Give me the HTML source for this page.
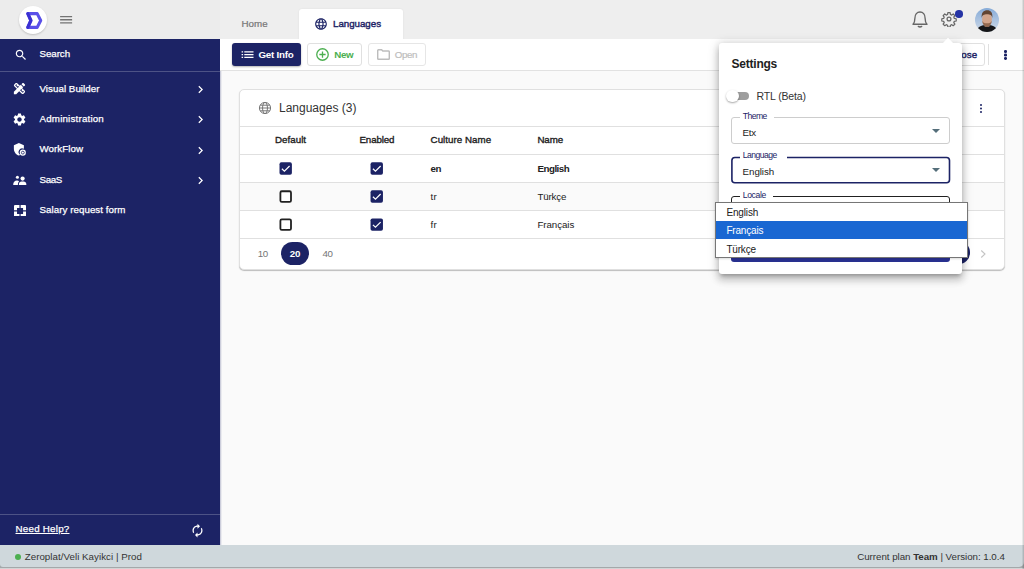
<!DOCTYPE html>
<html lang="en">
<head>
<meta charset="utf-8">
<title>Languages</title>
<style>
*{box-sizing:border-box;margin:0;padding:0}
html,body{width:1024px;height:569px;overflow:hidden;background:#fafafa}
body{font-family:"Liberation Sans",sans-serif;font-size:9.75px;color:#212121;position:relative}
div,svg,span{position:absolute}
.t{white-space:nowrap;line-height:12px;height:12px}
.b{font-weight:700}
b{font-weight:700}
</style>
</head>
<body>
<div style="left:0px;top:0px;width:1024px;height:39px;background:#ececec"></div>
<div style="left:220px;top:0px;width:804px;height:39px;background:#eeeeee"></div>
<div style="left:18.7px;top:5.5px;width:28.6px;height:28.6px;border-radius:50%;background:#fff;box-shadow:0 1px 2px rgba(0,0,0,.18)"></div>
<svg style="left:19px;top:6px" width="28" height="28" viewBox="0 0 28 28" ><path d="M8.800 7.600 H18.200 L21.700 14.500 L18.200 21.400 H8.800 L11.900 14.500 Z" fill="none" stroke="#5a50e8" stroke-width="3.100" stroke-linejoin="round"/><path d="M8.800 7.600 L11.900 14.500 L8.800 21.400" fill="none" stroke="#3a30d2" stroke-width="3.100" stroke-linejoin="round" stroke-linecap="round"/></svg>
<svg style="left:59px;top:14px" width="14" height="11" viewBox="0 0 14 11" ><path d="M1.100 2.700h12M1.100 5.750h12M1.100 8.800h12" stroke="#737373" stroke-width="1.300"/></svg>
<span class="t" style="top:17.80px;font-size:9.75px;color:#757575;left:241.4px;letter-spacing:0.071px;-webkit-text-stroke:0.2px #757575;">Home</span><div style="left:299px;top:9px;width:103.5px;height:30.5px;background:#fff;border-radius:3px 3px 0 0;box-shadow:0 0 2px rgba(0,0,0,.08)"></div>
<svg style="left:314.3px;top:16.5px" width="14" height="14" viewBox="0 0 24 24" ><path fill="#1c2365" d="M11.99 2C6.47 2 2 6.48 2 12s4.47 10 9.99 10C17.52 22 22 17.52 22 12S17.52 2 11.99 2zm6.93 6h-2.95c-.32-1.25-.78-2.45-1.38-3.56 1.84.63 3.37 1.91 4.33 3.56zM12 4.040c.83 1.2 1.480 2.530 1.910 3.960h-3.820c.43-1.430 1.080-2.760 1.910-3.960zM4.260 14C4.100 13.360 4 12.690 4 12s.1-1.360.26-2h3.380c-.08.660-.14 1.320-.14 2 0 .68.060 1.340.14 2H4.260zm.82 2h2.950c.32 1.250.78 2.450 1.380 3.560-1.840-.63-3.370-1.900-4.330-3.560zm2.950-8H5.080c.96-1.660 2.490-2.930 4.330-3.560C8.810 5.550 8.350 6.750 8.030 8zM12 19.960c-.83-1.2-1.480-2.530-1.910-3.960h3.820c-.43 1.430-1.080 2.760-1.910 3.960zM14.340 14H9.660c-.09-.66-.16-1.320-.16-2 0-.68.070-1.350.16-2h4.680c.09.650.16 1.320.16 2 0 .68-.07 1.340-.16 2zm.25 5.560c.6-1.110 1.060-2.310 1.380-3.560h2.950c-.96 1.650-2.490 2.930-4.330 3.560zM16.360 14c.08-.66.14-1.320.14-2 0-.68-.06-1.340-.14-2h3.380c.16.640.26 1.310.26 2s-.1 1.360-.26 2h-3.380z"/></svg>
<span class="t" style="top:17.50px;font-size:9.75px;color:#1c2365;left:333px;letter-spacing:-0.030px;-webkit-text-stroke:0.4px #1c2365;">Languages</span><svg style="left:911px;top:10px" width="18" height="19" viewBox="0 0 18 19" ><path d="M2 14.200 C3.600 12.600 3.900 11 3.900 8.200 C3.900 4.600 6 2 9 2 C12 2 14.100 4.600 14.100 8.200 C14.100 11 14.400 12.600 16 14.200 Z" fill="none" stroke="#666" stroke-width="1.350" stroke-linejoin="round"/><path d="M7.300 16.400 Q9 17.600 10.700 16.400" fill="none" stroke="#666" stroke-width="1.350" stroke-linecap="round"/></svg>
<svg style="left:940.5px;top:10.9px" width="16" height="16" viewBox="0 0 24 24" fill="none" stroke="#666" stroke-width="1.850" stroke-linejoin="round"><path d="M10.300 2.500 h3.400 l.5 2.800 l1.900 .8 l2.300 -1.600 l2.400 2.400 l-1.600 2.300 l.8 1.900 l2.800 .5 v3.400 l-2.800 .5 l-.8 1.900 l1.600 2.300 l-2.400 2.400 l-2.300 -1.600 l-1.900 .8 l-.5 2.800 h-3.400 l-.5 -2.800 l-1.900 -.8 l-2.300 1.600 l-2.400 -2.400 l1.600 -2.300 l-.8 -1.900 l-2.800 -.5 v-3.400 l2.800 -.5 l.8 -1.900 l-1.600 -2.300 l2.400 -2.400 l2.300 1.600 l1.900 -.8 z"/><circle cx="12" cy="12" r="2.900"/></svg>
<div style="left:955px;top:10px;width:7.5px;height:7.5px;border-radius:50%;background:#2533a5"></div>
<svg style="left:975px;top:7.5px" width="24" height="24" viewBox="0 0 24 24" ><defs><clipPath id="av"><circle cx="12" cy="12" r="12"/></clipPath><linearGradient id="avg" x1="0" y1="0" x2="0" y2="1"><stop offset="0" stop-color="#86abd8"/><stop offset="1" stop-color="#cfdae8"/></linearGradient></defs><g clip-path="url(#av)"><rect width="24" height="24" fill="url(#avg)"/><path d="M1.500 24 C2 19.500 5 18 8.500 17.300 L15.500 17.300 C19 18 22 19.500 22.500 24 Z" fill="#151618"/><rect x="9.600" y="14.500" width="4.800" height="4.200" fill="#b98a6f"/><ellipse cx="12" cy="11.300" rx="4.900" ry="6.300" fill="#d2a58b"/><path d="M6.700 10 C6.200 4.300 8.800 2.200 12.200 2.200 C15.700 2.200 17.800 4.300 17.300 10 C16.700 7 15.300 6.300 12 6.300 C8.900 6.300 7.300 7 6.700 10 Z" fill="#624532"/><path d="M7.200 12.800 C7.600 17.300 9.800 18.400 12 18.400 C14.200 18.400 16.400 17.300 16.800 12.800 C15.800 15.200 13.600 15.300 12 15.300 C10.400 15.300 8.200 15.200 7.200 12.800 Z" fill="#946a50"/></g></svg>
<div style="left:220px;top:39px;width:2px;height:506px;background:linear-gradient(90deg,rgba(28,35,101,.28),rgba(28,35,101,0))"></div>
<div style="left:0px;top:39px;width:220px;height:506px;background:#1c2365"></div>
<svg style="left:13.5px;top:47.5px" width="14" height="14" viewBox="0 0 24 24" ><path fill="#fff" d="M15.5 14h-.79l-.28-.27C15.41 12.59 16 11.11 16 9.5 16 5.91 13.09 3 9.5 3S3 5.91 3 9.5 5.91 16 9.5 16c1.61 0 3.09-.59 4.23-1.57l.27.28v.79l5 4.99L20.49 19l-4.99-5zm-6 0C7.01 14 5 11.99 5 9.5S7.01 5 9.5 5 14 7.01 14 9.500 11.990 14 9.500 14z"/></svg>
<span class="t" style="top:48.30px;font-size:9.75px;color:#fff;left:39.5px;letter-spacing:-0.068px;-webkit-text-stroke:0.25px #fff;">Search</span><div style="left:0px;top:70.5px;width:220px;height:1px;background:rgba(255,255,255,.22)"></div>
<span class="t" style="top:82.50px;font-size:9.75px;color:#fff;left:39.5px;letter-spacing:0.039px;-webkit-text-stroke:0.25px #fff;">Visual Builder</span><span class="t" style="top:113.00px;font-size:9.75px;color:#fff;left:39.5px;letter-spacing:0.194px;-webkit-text-stroke:0.25px #fff;">Administration</span><span class="t" style="top:143.20px;font-size:9.75px;color:#fff;left:39.5px;letter-spacing:0.043px;-webkit-text-stroke:0.25px #fff;">WorkFlow</span><span class="t" style="top:173.70px;font-size:9.75px;color:#fff;left:39.5px;letter-spacing:-0.340px;-webkit-text-stroke:0.25px #fff;">SaaS</span><span class="t" style="top:204.10px;font-size:9.75px;color:#fff;left:39.5px;letter-spacing:0.049px;-webkit-text-stroke:0.25px #fff;">Salary request form</span><svg style="left:193.2px;top:81.9px" width="15" height="15" viewBox="0 0 24 24" ><path fill="#fff" d="M10 6L8.59 7.41 13.17 12l-4.58 4.59L10 18l6-6z"/></svg>
<svg style="left:193.2px;top:112.4px" width="15" height="15" viewBox="0 0 24 24" ><path fill="#fff" d="M10 6L8.59 7.41 13.17 12l-4.58 4.59L10 18l6-6z"/></svg>
<svg style="left:193.2px;top:142.7px" width="15" height="15" viewBox="0 0 24 24" ><path fill="#fff" d="M10 6L8.59 7.41 13.17 12l-4.58 4.59L10 18l6-6z"/></svg>
<svg style="left:193.2px;top:173.2px" width="15" height="15" viewBox="0 0 24 24" ><path fill="#fff" d="M10 6L8.59 7.41 13.17 12l-4.58 4.59L10 18l6-6z"/></svg>
<svg style="left:12.05px;top:81.4px" width="15" height="15" viewBox="0 0 24 24" ><path fill="#fff" d="M16.24 11.51l1.57-1.57-3.75-3.75-1.57 1.57-4.14-4.13c-.78-.78-2.05-.78-2.830 0l-1.900 1.900c-.78.78-.78 2.050 0 2.830l4.130 4.130L3 17.250V21h3.750l4.760-4.760 4.130 4.130c.95.95 2.230.6 2.830 0l1.900-1.900c.78-.78.78-2.050 0-2.830l-4.130-4.130zm-7.060-.44L5.040 6.940l1.890-1.900L8.200 6.310 7.020 7.500l1.410 1.410 1.190-1.190 1.450 1.450-1.890 1.900zm7.880 7.890l-4.130-4.130 1.900-1.900 1.450 1.450-1.190 1.190 1.410 1.410 1.190-1.190 1.270 1.270-1.900 1.900zM20.710 7.040c.39-.39.39-1.020 0-1.410l-2.340-2.340c-.47-.47-1.120-.29-1.410 0l-1.830 1.830 3.750 3.750 1.830-1.830z"/></svg>
<svg style="left:12.4px;top:111.7px" width="15" height="15" viewBox="0 0 24 24" ><path fill="#fff" d="M19.14 12.94c.04-.3.06-.61.06-.94 0-.32-.02-.64-.07-.94l2.03-1.58c.18-.14.23-.41.12-.61l-1.92-3.32c-.12-.22-.37-.29-.59-.22l-2.39.96c-.5-.38-1.03-.7-1.62-.94l-.36-2.54c-.04-.24-.24-.41-.48-.41h-3.84c-.24 0-.43.17-.47.41l-.36 2.54c-.59.24-1.13.57-1.62.94l-2.39-.96c-.22-.08-.47 0-.59.22L2.740 8.870c-.12.21-.08.47.12.61l2.030 1.580c-.05.3-.09.630-.09.940s.02.640.07.940l-2.030 1.580c-.18.140-.23.410-.12.610l1.920 3.320c.12.220.37.290.59.220l2.390-.96c.5.380 1.030.7 1.620.94l.36 2.540c.05.240.24.410.48.410h3.840c.24 0 .44-.17.470-.41l.36-2.540c.59-.24 1.130-.56 1.620-.94l2.390.96c.22.080.47 0 .59-.22l1.920-3.320c.12-.22.070-.47-.12-.61l-2.010-1.580zM12 15.600c-1.980 0-3.600-1.620-3.600-3.600s1.620-3.600 3.600-3.600 3.600 1.620 3.600 3.600-1.620 3.600-3.600 3.600z"/></svg>
<svg style="left:12px;top:142.3px" width="15" height="15" viewBox="0 0 24 24" ><path fill="#fff" d="M11 1.500L3 5v5.600c0 5 3.400 9.700 8 10.900 .75-.2 1.450-.5 2.100-.85 A5.800 5.800 0 0 1 19 10.700 V5z"/><circle cx="17.300" cy="17" r="4.900" fill="#fff"/><circle cx="17.300" cy="17" r="2.300" fill="none" stroke="#1c2365" stroke-width="1.300"/></svg>
<svg style="left:12px;top:174px" width="16" height="12" viewBox="0 0 16 12" ><g fill="#fff"><circle cx="5.400" cy="3.200" r="1.550"/><path d="M1.200 11 C1.200 8.200 2.600 6.600 5 6.600 C5.900 6.600 6.600 6.800 7.100 7.200 C6.300 8 5.900 9.200 5.900 11 Z"/><circle cx="10.600" cy="4.600" r="2.100"/><path d="M6.800 11 C6.800 8.600 8.200 7.600 9.400 7.600 L11.800 7.600 C13 7.600 14.400 8.600 14.400 11 Z"/></g></svg>
<svg style="left:13.7px;top:204.5px" width="12.1" height="11.9" viewBox="0 0 12 12" preserveAspectRatio="none"><path fill="#fff" d="M1 0h4.400v3H3v2.400H0V1a1 1 0 0 1 1-1zM11 0a1 1 0 0 1 1 1v4.400H9V3H6.600V0zM0 6.600h3V9h2.400v3H1a1 1 0 0 1-1-1zM12 6.600V11a1 1 0 0 1-1 1H6.600V9H9V6.600z"/></svg>
<div style="left:0px;top:514px;width:220px;height:1px;background:rgba(255,255,255,.22)"></div>
<span class="t" style="top:523.10px;font-size:9.75px;color:#fff;left:15.5px;letter-spacing:0.250px;-webkit-text-stroke:0.25px #fff;text-decoration:underline;">Need Help?</span><svg style="left:190px;top:522.9px" width="15" height="15" viewBox="0 0 24 24" ><path fill="#fff" d="M12 6v3l4-4-4-4v3c-4.42 0-8 3.58-8 8 0 1.57.46 3.030 1.240 4.260L6.700 14.800c-.45-.83-.7-1.790-.7-2.800 0-3.310 2.690-6 6-6zm6.760 1.740L17.300 9.200c.44.840.7 1.790.7 2.800 0 3.310-2.690 6-6 6v-3l-4 4 4 4v-3c4.420 0 8-3.580 8-8 0-1.570-.46-3.030-1.240-4.260z"/></svg>
<div style="left:220px;top:39px;width:804px;height:31.5px;background:#fff;border-bottom:1px solid #e2e2e2"></div>
<div style="left:232px;top:43px;width:69px;height:23px;background:#1c2365;border-radius:3px;box-shadow:0 1px 2px rgba(0,0,0,.3)"></div>
<svg style="left:241px;top:50px" width="13" height="9" viewBox="0 0 13 9" ><path d="M0.600 1.900h1.500M3.300 1.900h9.200M0.600 4.650h1.500M3.300 4.650h9.200M0.600 7.400h1.500M3.300 7.400h9.200" stroke="#fff" stroke-width="1.350"/></svg>
<span class="t b" style="top:48.50px;font-size:9.75px;color:#fff;left:258.5px;letter-spacing:-0.230px;">Get Info</span><div style="left:307px;top:43px;width:54.5px;height:22.6px;background:#fff;border:1px solid #e0e0e0;border-radius:3px"></div>
<svg style="left:315.3px;top:47.2px" width="15" height="15" viewBox="0 0 24 24" ><circle cx="12" cy="12" r="9.200" fill="none" stroke="#4caf50" stroke-width="2.100"/><path d="M12 7v10M7 12h10" stroke="#4caf50" stroke-width="2.100"/></svg>
<span class="t b" style="top:48.50px;font-size:9.75px;color:#4caf50;left:334.3px;letter-spacing:-0.354px;">New</span><div style="left:368px;top:43px;width:57.5px;height:22.6px;background:#fff;border:1px solid #e6e6e6;border-radius:3px"></div>
<svg style="left:377px;top:49px" width="13" height="11" viewBox="0 0 13 11" ><path d="M0.700 1.700 Q0.700 0.700 1.700 0.700 H4.600 L5.800 2 H11.300 Q12.300 2 12.300 3 V9.300 Q12.300 10.300 11.300 10.300 H1.700 Q0.700 10.300 0.700 9.300 Z" fill="none" stroke="#bdbdbd" stroke-width="1.450"/></svg>
<span class="t" style="top:48.50px;font-size:9.75px;color:#bdbdbd;left:394.8px;letter-spacing:-0.390px;-webkit-text-stroke:0.2px #bdbdbd;">Open</span><div style="left:932px;top:43px;width:53px;height:22.6px;background:#fff;border:1px solid #e0e0e0;border-radius:3px"></div>
<span class="t" style="top:48.50px;font-size:9.75px;color:#1c2365;left:951.5px;letter-spacing:0.212px;-webkit-text-stroke:0.4px #1c2365;">Close</span><div style="left:988px;top:44px;width:1px;height:21px;background:#e0e0e0"></div>
<div style="left:1004.450px;top:50.200px;width:2.600px;height:2.600px;border-radius:50%;background:#1c2365;box-shadow:0 3.450px 0 #1c2365,0 6.900px 0 #1c2365"></div>
<div style="left:239px;top:89px;width:766px;height:181px;background:#fff;border:1px solid #e0e0e0;border-radius:5px;box-shadow:0 1px 1px rgba(0,0,0,.25)"></div>
<svg style="left:258px;top:100.8px" width="14" height="14" viewBox="0 0 24 24" ><g fill="none" stroke="#757575" stroke-width="1.700"><circle cx="12" cy="12" r="9.600"/><ellipse cx="12" cy="12" rx="4.200" ry="9.600"/><path d="M2.400 12h19.200M3.800 7.200h16.400M3.800 16.800h16.400"/></g></svg>
<span class="t" style="top:99.70px;font-size:12px;color:#333;left:279px;line-height:16px;height:16px;letter-spacing:0.001px;">Languages (3)</span><div style="left:979.700px;top:103.550px;width:2.400px;height:2.400px;border-radius:50%;background:#1c2365;box-shadow:0 3.550px 0 #1c2365,0 7.100px 0 #1c2365"></div>
<div style="left:240px;top:182.5px;width:764px;height:28px;background:#fafafa"></div>
<div style="left:240px;top:126px;width:764px;height:1px;background:#e0e0e0"></div>
<div style="left:240px;top:154px;width:764px;height:1px;background:#e0e0e0"></div>
<div style="left:240px;top:182px;width:764px;height:1px;background:#e0e0e0"></div>
<div style="left:240px;top:210px;width:764px;height:1px;background:#e0e0e0"></div>
<div style="left:240px;top:238px;width:764px;height:1px;background:#e0e0e0"></div>
<span class="t" style="top:134.00px;font-size:9.75px;color:#212121;left:275px;letter-spacing:0.028px;-webkit-text-stroke:0.35px #212121;">Default</span><span class="t" style="top:134.00px;font-size:9.75px;color:#212121;left:359.5px;letter-spacing:-0.142px;-webkit-text-stroke:0.35px #212121;">Enabled</span><span class="t" style="top:134.00px;font-size:9.75px;color:#212121;left:430.6px;letter-spacing:0.029px;-webkit-text-stroke:0.35px #212121;">Culture Name</span><span class="t" style="top:134.00px;font-size:9.75px;color:#212121;left:537.4px;letter-spacing:-0.079px;-webkit-text-stroke:0.35px #212121;">Name</span><svg style="left:277px;top:160px" width="16" height="16" viewBox="0 0 16 16" ><g transform="translate(2.50,2.35) scale(0.5167)"><rect x="0" y="0" width="24" height="24" rx="3.500" fill="#1c2365"/><path d="M4.600 12.400l4.900 4.700 10-10" fill="none" stroke="#fff" stroke-width="2.300"/></g></svg>
<svg style="left:368px;top:160px" width="16" height="16" viewBox="0 0 16 16" ><g transform="translate(2.55,2.35) scale(0.5167)"><rect x="0" y="0" width="24" height="24" rx="3.500" fill="#1c2365"/><path d="M4.600 12.400l4.900 4.700 10-10" fill="none" stroke="#fff" stroke-width="2.300"/></g></svg>
<span class="t b" style="top:162.60px;font-size:9.75px;color:#212121;left:430.6px;letter-spacing:-0.395px;">en</span><span class="t b" style="top:162.60px;font-size:9.75px;color:#212121;left:537.4px;letter-spacing:-0.474px;">English</span><svg style="left:277px;top:188px" width="16" height="16" viewBox="0 0 16 16" ><g transform="translate(2.50,2.35)"><rect x="0.900" y="0.900" width="10.600" height="10.600" rx="1.400" fill="#fff" stroke="#212121" stroke-width="1.800"/></g></svg>
<svg style="left:368px;top:188px" width="16" height="16" viewBox="0 0 16 16" ><g transform="translate(2.55,2.35) scale(0.5167)"><rect x="0" y="0" width="24" height="24" rx="3.500" fill="#1c2365"/><path d="M4.600 12.400l4.900 4.700 10-10" fill="none" stroke="#fff" stroke-width="2.300"/></g></svg>
<span class="t" style="top:190.60px;font-size:9.75px;color:#212121;left:430.6px;letter-spacing:0.216px;">tr</span><span class="t" style="top:190.60px;font-size:9.75px;color:#212121;left:537.4px;letter-spacing:-0.152px;">Türkçe</span><svg style="left:277px;top:216px" width="16" height="16" viewBox="0 0 16 16" ><g transform="translate(2.50,2.45)"><rect x="0.900" y="0.900" width="10.600" height="10.600" rx="1.400" fill="#fff" stroke="#212121" stroke-width="1.800"/></g></svg>
<svg style="left:368px;top:216px" width="16" height="16" viewBox="0 0 16 16" ><g transform="translate(2.55,2.45) scale(0.5167)"><rect x="0" y="0" width="24" height="24" rx="3.500" fill="#1c2365"/><path d="M4.600 12.400l4.900 4.700 10-10" fill="none" stroke="#fff" stroke-width="2.300"/></g></svg>
<span class="t" style="top:218.70px;font-size:9.75px;color:#212121;left:430.6px;letter-spacing:0.216px;">fr</span><span class="t" style="top:218.70px;font-size:9.75px;color:#212121;left:537.4px;letter-spacing:-0.061px;">Français</span><span class="t" style="top:248.10px;font-size:9.75px;color:#757575;left:257.8px;letter-spacing:-0.430px;">10</span><div style="left:281px;top:242.3px;width:28px;height:22.5px;border-radius:11.500px;background:#1c2365"></div>
<span class="t b" style="top:248.10px;font-size:9.75px;color:#fff;left:289.8px;letter-spacing:-0.180px;">20</span><span class="t" style="top:248.10px;font-size:9.75px;color:#757575;left:322.5px;letter-spacing:-0.430px;">40</span><div style="left:947px;top:241px;width:22.5px;height:22.5px;border-radius:50%;background:#1c2365"></div>
<svg style="left:976.8px;top:248.2px" width="12" height="12" viewBox="0 0 24 24" ><path d="M8.500 5l7.500 7-7.500 7" fill="none" stroke="#c4c4c4" stroke-width="2.200"/></svg>
<div style="left:0px;top:560px;width:1024px;height:9px;background:linear-gradient(180deg,#a4a8aa 0,#a4a8aa 8px,#d2d4d5 8px)"></div>
<div style="left:0px;top:545px;width:1024px;height:22px;background:#cfd8dc;border-radius:0 0 5px 3px"></div>
<div style="left:15.1px;top:554.3px;width:6px;height:6px;border-radius:50%;background:#4caf50"></div>
<span class="t" style="top:551.40px;font-size:9.75px;color:#333;left:24.7px;letter-spacing:0.034px;">Zeroplat/Veli Kayikci | Prod</span><span class="t" style="top:551.40px;font-size:9.75px;color:#333;left:857.2px;letter-spacing:-0.032px;">Current plan <b>Team</b> | Version: 1.0.4</span><div style="left:1022px;top:0px;width:2px;height:569px;background:linear-gradient(90deg,rgba(0,0,0,.03),rgba(0,0,0,.2))"></div>
<div style="left:719px;top:42.5px;width:243px;height:231px;background:#fff;border-radius:3px;box-shadow:0 3.750px 3.750px -2.250px rgba(0,0,0,.2),0 6px 7.500px .750px rgba(0,0,0,.14),0 2.250px 10.500px 1.500px rgba(0,0,0,.12),0 -1px 7px rgba(0,0,0,.07)"></div>
<svg style="left:941px;top:36.5px" width="14" height="7" viewBox="0 0 14 7" ><path d="M1 7 L7 0.800 L13 7 Z" fill="#fff"/></svg>
<span class="t b" style="top:56.40px;font-size:12px;color:#212121;left:731.6px;line-height:16px;height:16px;letter-spacing:-0.243px;">Settings</span><div style="left:732.5px;top:92.3px;width:16px;height:7.5px;border-radius:4px;background:#9e9e9e"></div>
<div style="left:726px;top:89.8px;width:12.5px;height:12.5px;border-radius:50%;background:#fff;box-shadow:0 1px 2px rgba(0,0,0,.35)"></div>
<span class="t" style="top:89.70px;font-size:10.5px;color:#333;left:756.6px;letter-spacing:-0.158px;">RTL (Beta)</span><div style="left:731px;top:117px;width:219px;height:27px;border:1px solid #cdcdcd;border-radius:3px"></div>
<div style="left:739.5px;top:116px;width:34.5px;height:4px;background:#fff"></div>
<span class="t" style="top:110.00px;font-size:8.6px;color:#1c2365;left:742.8px;letter-spacing:-0.550px;">Theme</span><span class="t" style="top:126.50px;font-size:9.75px;color:#212121;left:742.6px;letter-spacing:-0.231px;">Etx</span><svg style="left:931.6px;top:128.7px" width="8" height="4" viewBox="0 0 8 4" ><path d="M0 0h8L4 4z" fill="#546e7a"/></svg>
<svg style="left:730px;top:156px" width="221" height="28" viewBox="0 0 221 28" ><rect x="1.900" y="1.500" width="217.600" height="25.200" rx="3" fill="none" stroke="#1c2365" stroke-width="1.600"/></svg>
<div style="left:739.5px;top:155px;width:47.5px;height:5px;background:#fff"></div>
<span class="t" style="top:149.00px;font-size:8.6px;color:#1c2365;left:742.8px;letter-spacing:-0.544px;">Language</span><span class="t" style="top:166.00px;font-size:9.75px;color:#212121;left:742.6px;letter-spacing:-0.069px;">English</span><svg style="left:931.6px;top:168px" width="8" height="4" viewBox="0 0 8 4" ><path d="M0 0h8L4 4z" fill="#546e7a"/></svg>
<div style="left:731px;top:196px;width:219px;height:26.5px;border:1px solid #212121;border-radius:3px"></div>
<div style="left:739.5px;top:194px;width:33.5px;height:4px;background:#fff"></div>
<span class="t" style="top:188.50px;font-size:8.6px;color:#1c2365;left:742.8px;letter-spacing:-0.388px;">Locale</span><div style="left:731px;top:238px;width:219px;height:24px;background:#28308f;border-radius:3px"></div>
<div style="left:715px;top:202px;width:252.5px;height:55.7px;background:#fff;border:1px solid #767676;box-shadow:0 1px 2px rgba(0,0,0,.15)"></div>
<div style="left:716px;top:221px;width:250.5px;height:18px;background:#1967d2"></div>
<span class="t" style="top:206.90px;font-size:10px;color:#212121;left:726.4px;letter-spacing:-0.145px;">English</span><span class="t" style="top:225.30px;font-size:10px;color:#fff;left:726.4px;letter-spacing:-0.182px;">Français</span><span class="t" style="top:243.50px;font-size:10px;color:#212121;left:726.4px;letter-spacing:-0.177px;">Türkçe</span></body>
</html>
